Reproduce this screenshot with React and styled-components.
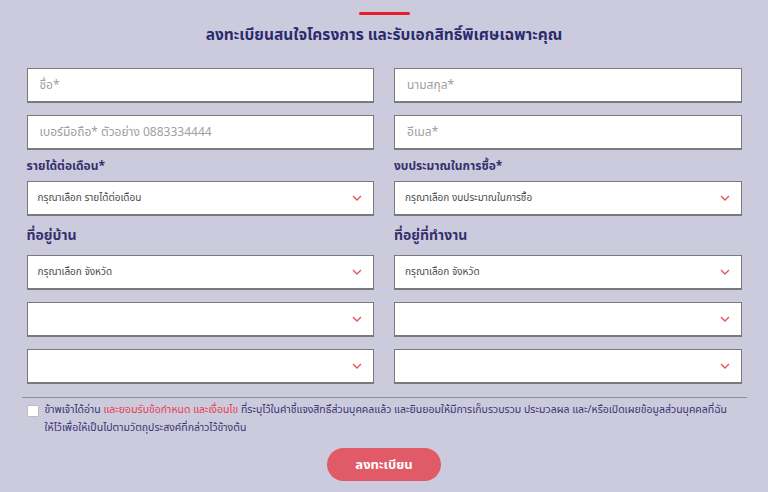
import React from "react";
import styled, { createGlobalStyle } from "styled-components";

const GlobalStyle = createGlobalStyle`
  html, body {
    margin: 0;
    padding: 0;
    background: #cccbde;
  }
  body {
    font-family: "Noto Sans Thai", "Noto Sans", "DejaVu Sans", sans-serif;
  }
`;

const Page = styled.div`
  width: 768px;
  height: 492px;
  overflow: hidden;
  background: #cccbde;
  box-sizing: border-box;
  padding-top: 12px;
`;

const RedLine = styled.div`
  width: 51px;
  height: 3px;
  margin: 0 auto;
  background: #e3202c;
  border-radius: 2px;
`;

const Title = styled.h2`
  margin: 9px 0 0;
  text-align: center;
  font-size: 15.5px;
  line-height: 24px;
  font-weight: 700;
  color: #2c2a6c;
`;

const Form = styled.form`
  width: 725px;
  margin: 20px auto 0;
  box-sizing: border-box;
  padding: 0 5px;
`;

const Grid = styled.div`
  display: grid;
  grid-template-columns: 1fr 1fr;
  column-gap: 20px;
`;

const Field = styled.div`
  display: flex;
  flex-direction: column;
  margin-top: ${(p) => p.$top || 0}px;
`;

const Label = styled.label`
  font-size: ${(p) => (p.$big ? 14 : 12)}px;
  line-height: ${(p) => (p.$big ? 24 : 18)}px;
  font-weight: 700;
  color: #36306d;
  margin-bottom: ${(p) => (p.$big ? 7 : 6)}px;
`;

const Input = styled.input`
  box-sizing: border-box;
  height: 35px;
  width: 100%;
  border: 1px solid #7a7a7a;
  border-bottom-width: 2px;
  background: #fff;
  padding: 0 12px;
  font-family: inherit;
  font-size: 12px;
  color: #333;
  outline: none;
  &::placeholder {
    color: #a0a0a0;
  }
`;

const SelectBox = styled.div`
  box-sizing: border-box;
  height: 35px;
  border: 1px solid #7a7a7a;
  border-bottom-width: 2px;
  background: #fff;
  display: flex;
  align-items: center;
  justify-content: space-between;
  padding: 0 11px 0 10px;
  font-size: 10px;
  color: #4a4a4a;
`;

const Chevron = () => (
  <svg width="10" height="6" viewBox="0 0 10 6">
    <path d="M1 1l4 4 4-4" fill="none" stroke="#e8525c" strokeWidth="1.4" />
  </svg>
);

const Select = ({ text }) => (
  <SelectBox>
    <span>{text}</span>
    <Chevron />
  </SelectBox>
);

const Divider = styled.hr`
  border: 0;
  border-top: 1px solid #8e8d9c;
  margin: 13px -5px 0;
`;

const Consent = styled.div`
  display: flex;
  align-items: flex-start;
  gap: 6px;
  margin-top: 3px;
`;

const Box = styled.span`
  flex: none;
  width: 10px;
  height: 10px;
  margin-top: 4px;
  background: #fff;
  border: 1px solid #bdbdbd;
  border-radius: 1px;
`;

const ConsentText = styled.p`
  margin: 0;
  font-size: 10.5px;
  line-height: 18px;
  color: #3a3470;
`;

const Red = styled.span`
  color: #e8404a;
`;

const Submit = styled.button`
  display: block;
  margin: 11px auto 0;
  width: 114px;
  height: 33px;
  border: 0;
  border-radius: 17px;
  background: #e05a68;
  color: #fff;
  font-family: inherit;
  font-size: 13px;
  font-weight: 700;
`;

export default function App() {
  return (
    <Page>
      <GlobalStyle />
      <RedLine />
      <Title>ลงทะเบียนสนใจโครงการ และรับเอกสิทธิ์พิเศษเฉพาะคุณ</Title>
      <Form>
        <Grid>
          <Field>
            <Input placeholder="ชื่อ*" />
          </Field>
          <Field>
            <Input placeholder="นามสกุล*" />
          </Field>
          <Field $top={12}>
            <Input placeholder="เบอร์มือถือ* ตัวอย่าง 0883334444" />
          </Field>
          <Field $top={12}>
            <Input placeholder="อีเมล*" />
          </Field>
          <Field $top={7}>
            <Label>รายได้ต่อเดือน*</Label>
            <Select text="กรุณาเลือก รายได้ต่อเดือน" />
          </Field>
          <Field $top={7}>
            <Label>งบประมาณในการซื้อ*</Label>
            <Select text="กรุณาเลือก งบประมาณในการซื้อ" />
          </Field>
          <Field $top={8}>
            <Label $big>ที่อยู่บ้าน</Label>
            <Select text="กรุณาเลือก จังหวัด" />
          </Field>
          <Field $top={8}>
            <Label $big>ที่อยู่ที่ทำงาน</Label>
            <Select text="กรุณาเลือก จังหวัด" />
          </Field>
          <Field $top={12}>
            <Select text="" />
          </Field>
          <Field $top={12}>
            <Select text="" />
          </Field>
          <Field $top={12}>
            <Select text="" />
          </Field>
          <Field $top={12}>
            <Select text="" />
          </Field>
        </Grid>
        <Divider />
        <Consent>
          <Box />
          <ConsentText>
            ข้าพเจ้าได้อ่าน <Red>และยอมรับข้อกำหนด และเงื่อนไข</Red>{" "}
            ที่ระบุไว้ในคำชี้แจงสิทธิ์ส่วนบุคคลแล้ว
            และยินยอมให้มีการเก็บรวบรวม ประมวลผล
            และ/หรือเปิดเผยข้อมูลส่วนบุคคลที่ฉัน
            <br />
            ให้ไว้เพื่อให้เป็นไปตามวัตถุประสงค์ที่กล่าวไว้ข้างต้น
          </ConsentText>
        </Consent>
        <Submit type="button">ลงทะเบียน</Submit>
      </Form>
    </Page>
  );
}
